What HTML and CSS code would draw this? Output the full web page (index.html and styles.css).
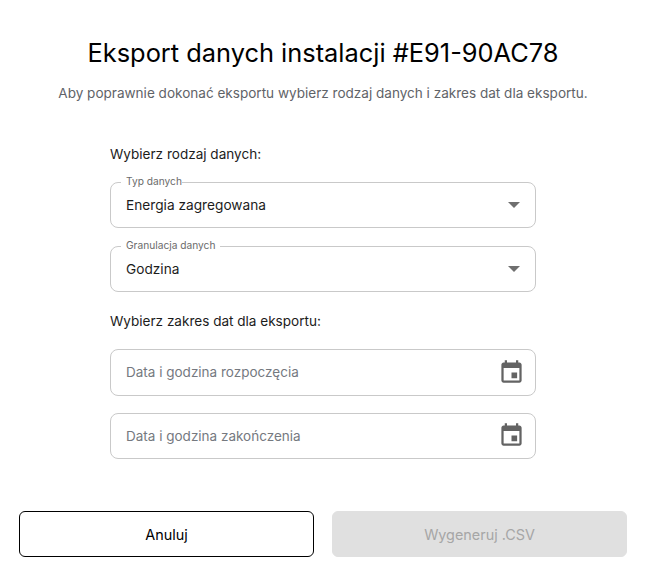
FILE: index.html
```html
<html><head><meta charset="utf-8">
<title>Eksport danych instalacji</title>
<link rel="stylesheet" href="styles.css">
</head><body>
<div class="dialog">
  <h1>Eksport danych instalacji #E91-90AC78</h1>
  <p class="subtitle">Aby poprawnie dokonać eksportu wybierz rodzaj danych i zakres dat dla eksportu.</p>

  <div class="form">
    <div class="section-label">Wybierz rodzaj danych:</div>
    <div class="field">
      <span class="float-label tight">Typ danych</span>
      <span class="value">Energia zagregowana</span>
      <span class="arrow"></span>
    </div>
    <div class="field">
      <span class="float-label">Granulacja danych</span>
      <span class="value">Godzina</span>
      <span class="arrow"></span>
    </div>

    <div class="section-label second">Wybierz zakres dat dla eksportu:</div>
    <div class="field date">
      <span class="placeholder">Data i godzina rozpoczęcia</span>
      <svg class="calendar" viewBox="0 0 24 24"><path d="M17 12h-5v5h5v-5zM16 1v2H8V1H6v2H5c-1.11 0-1.99.9-1.99 2L3 19c0 1.1.89 2 2 2h14c1.1 0 2-.9 2-2V5c0-1.1-.9-2-2-2h-1V1h-2zm3 18H5V8h14v11z"/></svg>
    </div>
    <div class="field date">
      <span class="placeholder">Data i godzina zakończenia</span>
      <svg class="calendar" viewBox="0 0 24 24"><path d="M17 12h-5v5h5v-5zM16 1v2H8V1H6v2H5c-1.11 0-1.99.9-1.99 2L3 19c0 1.1.89 2 2 2h14c1.1 0 2-.9 2-2V5c0-1.1-.9-2-2-2h-1V1h-2zm3 18H5V8h14v11z"/></svg>
    </div>
  </div>

  <div class="actions">
    <button class="btn cancel">Anuluj</button>
    <button class="btn generate" disabled>Wygeneruj .CSV</button>
  </div>
</div>
</body></html>
```

FILE: styles.css
```css
html, body {
  margin: 0;
  padding: 0;
  background-color: #fff;
}
body {
  font-family: Inter, "Liberation Sans", sans-serif;
  color: #000;
}
.dialog {
  width: 648px;
  height: 577px;
  padding: 37px 21px 0 19px;
  box-sizing: border-box;
  overflow: hidden;
}
h1 {
  margin: 0;
  font-size: 25.4px;
  font-weight: 400;
  line-height: 32px;
  text-align: center;
  white-space: nowrap;
}
.subtitle {
  margin: 15px 0 0;
  font-size: 13.55px;
  line-height: 18px;
  color: #5f6368;
  text-align: center;
  white-space: nowrap;
}
.form {
  width: 426px;
  margin: 42px auto 0;
}
.section-label {
  font-size: 13.55px;
  line-height: 20px;
  color: #1c1c1c;
  margin-bottom: 18px;
}
.section-label.second {
  margin-top: 19px;
}
.field {
  display: flex;
  align-items: center;
  justify-content: space-between;
  box-sizing: border-box;
  height: 46px;
  margin-bottom: 18px;
  padding: 0 15px;
  border: 1px solid #c9c9c9;
  border-radius: 8px;
  position: relative;
}
.float-label {
  position: absolute;
  left: 10px;
  top: -7px;
  padding: 0 5px;
  font-size: 10.2px;
  line-height: 10px;
  color: #6b6b6b;
  background-color: #fff;
}
.float-label.tight {
  padding-right: 0;
}
.value {
  font-size: 13.7px;
  line-height: 20px;
  color: #1c1c1c;
}
.arrow {
  position: absolute;
  right: 15px;
  top: 19px;
  width: 0;
  height: 0;
  border-left: 6px solid transparent;
  border-right: 6px solid transparent;
  border-top: 6px solid #6f6f6f;
}
.date {
  height: 46.5px;
  margin-bottom: 17px;
  padding-right: 10px;
}
.placeholder {
  font-size: 13.5px;
  color: #75797f;
}
.calendar {
  fill: #636363;
  width: 27px;
  height: 27px;
}
.actions {
  display: flex;
  gap: 18px;
  margin-top: 52px;
}
.btn {
  flex: 1 1 0;
  height: 46px;
  padding: 0;
  border-radius: 6px;
  font-family: Inter, "Liberation Sans", sans-serif;
  font-size: 14.4px;
}
.cancel {
  background-color: #fff;
  border: 1px solid #000;
  color: #000;
}
.generate {
  background-color: #e0e0e0;
  border: 1px solid #e0e0e0;
  color: #a6a6a6;
}
```
